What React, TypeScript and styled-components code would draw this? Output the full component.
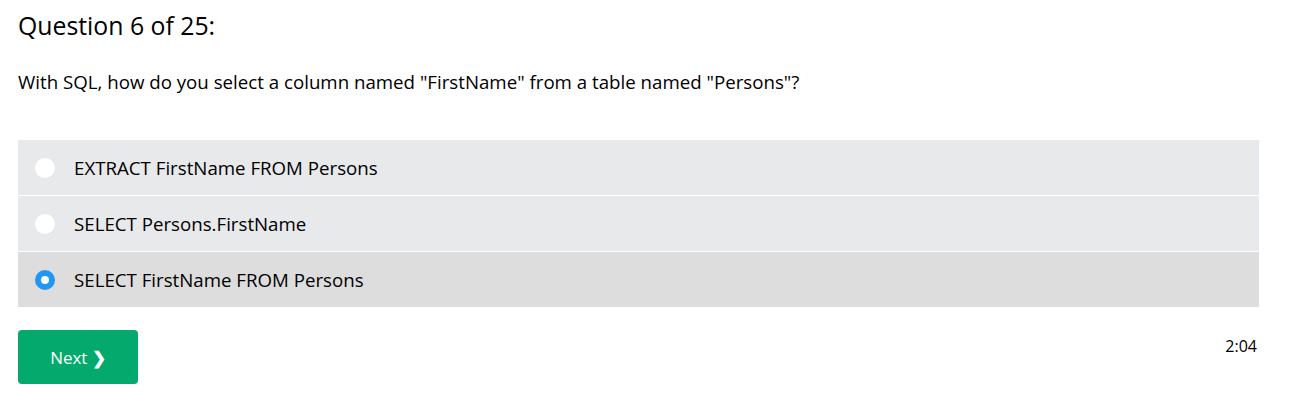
import React, { useState } from 'react'
import styled, { createGlobalStyle } from 'styled-components'

const GlobalStyle = createGlobalStyle`
    body {
        margin: 0;
        background: #fff;
        font-family: "Open Sans", "Noto Sans", sans-serif;
        color: #000;
    }
`

const Page = styled.div`
    padding: 7px 30px 0 18px;
`

const Heading = styled.h3`
    margin: 0;
    font-size: 24.8px;
    font-weight: 400;
    line-height: 36px;
`

const Question = styled.p`
    margin: 26px 0 0 0;
    font-size: 18.7px;
    line-height: 26px;
`

const Options = styled.div`
    margin-top: 45px;
    display: flex;
    flex-direction: column;
    gap: 1px;
`

const Option = styled.label<{ selected?: boolean }>`
    display: flex;
    align-items: center;
    height: 55px;
    padding-left: 17px;
    background: ${p => (p.selected ? '#dddddd' : '#e7e9eb')};
    font-size: 18.7px;
    cursor: pointer;
`

const Radio = styled.span<{ checked?: boolean }>`
    width: 20px;
    height: 20px;
    border-radius: 50%;
    margin-right: 19px;
    box-sizing: border-box;
    background: #fff;
    border: ${p => (p.checked ? '6px solid #2196f3' : 'none')};
`

const Footer = styled.div`
    margin-top: 23px;
    display: flex;
    justify-content: space-between;
    align-items: flex-start;
`

const NextButton = styled.button`
    width: 120px;
    height: 54px;
    border: none;
    border-radius: 4px;
    background: #04aa6d;
    color: #fff;
    font-family: inherit;
    font-size: 17px;
    cursor: pointer;
`

const Chevron = styled.span`
    font-weight: 700;
`

const Timer = styled.div`
    margin-top: 5px;
    margin-right: 2px;
    font-size: 16px;
`

const answers = [
    'EXTRACT FirstName FROM Persons',
    'SELECT Persons.FirstName',
    'SELECT FirstName FROM Persons'
]

const App = () => {
    const [picked, setPicked] = useState(2)

    return (
        <>
            <GlobalStyle />
            <Page>
                <Heading>Question 6 of 25:</Heading>
                <Question>
                    With SQL, how do you select a column named "FirstName" from a table named "Persons"?
                </Question>
                <Options>
                    {answers.map((a, i) => (
                        <Option key={a} selected={picked === i} onClick={() => setPicked(i)}>
                            <Radio checked={picked === i} />
                            {a}
                        </Option>
                    ))}
                </Options>
                <Footer>
                    <NextButton>
                        Next <Chevron>❯</Chevron>
                    </NextButton>
                    <Timer>2:04</Timer>
                </Footer>
            </Page>
        </>
    )
}

export default App
